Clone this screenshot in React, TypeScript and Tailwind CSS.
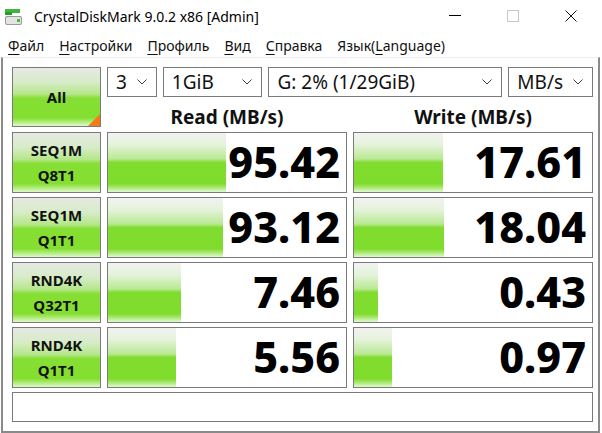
import React from "react";

const barBg =
  "bg-[linear-gradient(to_bottom,#f2f2f2_0%,#e4f3da_20%,#b9e994_44%,#80dc2e_50%,#7fdc2c_86%,#b4ec84_94%,#e4f8d4_100%)]";
const btnBg =
  "bg-[linear-gradient(to_bottom,#e6e9e4_0%,#d6ecc6_25%,#b5e68a_45%,#86df34_52%,#84df30_86%,#b8ee88_94%,#e0f8cc_100%)]";

function Chevron() {
  return (
    <svg width="10" height="6" viewBox="0 0 10 6" className="shrink-0">
      <path d="M0.5 0.5 L5 5 L9.5 0.5" fill="none" stroke="#404040" strokeWidth="1" />
    </svg>
  );
}

function Select({ w, label }: { w: string; label: string }) {
  return (
    <div
      className={`${w} h-[30px] border border-[#7a7a7a] bg-white flex items-center justify-between pl-[8px] pr-[9px] text-[19px] text-[#111] leading-none`}
    >
      <span>{label}</span>
      <Chevron />
    </div>
  );
}

function Label({ a, b }: { a: string; b: string }) {
  return (
    <div
      className={`h-[61px] border border-[#7a7a7a] ${btnBg} flex flex-col items-center justify-center text-[15px] font-bold leading-[25px] text-[#111]`}
    >
      <span>{a}</span>
      <span>{b}</span>
    </div>
  );
}

function Cell({ pct, value }: { pct: number; value: string }) {
  return (
    <div className="h-[61px] border border-[#7a7a7a] bg-white relative flex items-center justify-end pr-[6px]">
      <div className={`absolute left-0 top-0 bottom-0 ${barBg}`} style={{ width: `${pct}px` }} />
      <span className="relative text-[43px] font-extrabold leading-none text-black pb-[3px]">
        {value}
      </span>
    </div>
  );
}

export default function App() {
  const menu: [string, string][] = [
    ["Ф", "айл"],
    ["Н", "астройки"],
    ["П", "рофиль"],
    ["В", "ид"],
    ["С", "правка"],
  ];
  return (
    <div className="w-[602px] h-[433px] bg-white flex flex-col overflow-hidden font-['Noto_Sans','Segoe_UI',sans-serif] text-[#111]">
      {/* Title bar */}
      <div className="h-[31px] flex items-center shrink-0">
        <svg width="20" height="20" viewBox="0 0 20 20" className="ml-[4px] mt-[3px]">
          <rect x="1" y="2" width="15" height="4" fill="#3cb83c" />
          <rect x="1" y="5" width="7" height="3" fill="#2a9a2a" />
          <rect x="1" y="9" width="17" height="9" rx="2" fill="#9a9a9a" />
          <rect x="2" y="10" width="15" height="7" rx="1.5" fill="#e4e4e4" />
          <rect x="13" y="12" width="3" height="3" fill="#4cbc3c" />
        </svg>
        <span className="ml-[10px] text-[14px] mt-[2px] text-black">CrystalDiskMark 9.0.2 x86 [Admin]</span>
        <div className="ml-auto flex items-center h-full mr-[2px]">
          <div className="w-[58px] h-full flex items-center justify-center">
            <div className="w-[12px] h-px bg-black" />
          </div>
          <div className="w-[58px] h-full flex items-center justify-center">
            <div className="w-[12px] h-[12px] border border-[#c8c8c8]" />
          </div>
          <div className="w-[58px] h-full flex items-center justify-center">
            <svg width="12" height="12" viewBox="0 0 12 12">
              <path d="M0.5 0.5 L11.5 11.5 M11.5 0.5 L0.5 11.5" stroke="#111" strokeWidth="1" />
            </svg>
          </div>
        </div>
      </div>
      {/* Menu */}
      <div className="h-[26px] flex items-center text-[14px] shrink-0 pl-[8px] gap-[15px] pt-[2px]">
        {menu.map(([u, r]) => (
          <span key={u + r}>
            <span className="underline underline-offset-[3px] decoration-1">{u}</span>
            {r}
          </span>
        ))}
        <span>
          Язык(<span className="underline underline-offset-[3px] decoration-1">L</span>anguage)
        </span>
      </div>
      {/* Content frame */}
      <div className="flex-1 ml-[1px] mr-[2px] border-l-2 border-r-2 border-b-2 border-t border-l-[#8a8a8a] border-r-[#8a8a8a] border-b-[#8a8a8a] border-t-[#ececec] bg-white pl-[9px] pt-[9px]">
        <div className="grid grid-cols-[89px_240px_240px] gap-x-[6px] gap-y-[4px]">
          <div className={`relative h-[60px] self-start border border-[#7a7a7a] ${btnBg} flex items-center justify-center text-[15px] font-bold`}>
            All
            <svg width="12" height="12" viewBox="0 0 12 12" className="absolute right-0 bottom-0">
              <path d="M12 0 L12 12 L0 12 Z" fill="#f47a18" />
            </svg>
          </div>
          <div className="col-span-2 flex flex-col h-[61px]">
            <div className="flex gap-[6px]">
              <Select w="w-[50px]" label="3" />
              <Select w="w-[100px]" label="1GiB" />
              <Select w="w-[235px]" label="G: 2% (1/29GiB)" />
              <Select w="w-[85px]" label="MB/s" />
            </div>
            <div className="flex mt-[8px]">
              <div className="w-[240px] text-center text-[19px] font-bold leading-[24px]">Read (MB/s)</div>
              <div className="w-[246px] pl-[6px] text-center text-[19px] font-bold leading-[24px]">Write (MB/s)</div>
            </div>
          </div>
          <Label a="SEQ1M" b="Q8T1" />
          <Cell pct={118} value="95.42" />
          <Cell pct={89} value="17.61" />
          <Label a="SEQ1M" b="Q1T1" />
          <Cell pct={115} value="93.12" />
          <Cell pct={90} value="18.04" />
          <Label a="RND4K" b="Q32T1" />
          <Cell pct={73} value="7.46" />
          <Cell pct={24} value="0.43" />
          <Label a="RND4K" b="Q1T1" />
          <Cell pct={68} value="5.56" />
          <Cell pct={38} value="0.97" />
          <div className="col-span-3 h-[30px] border border-[#7a7a7a] bg-white" />
        </div>
      </div>
    </div>
  );
}
